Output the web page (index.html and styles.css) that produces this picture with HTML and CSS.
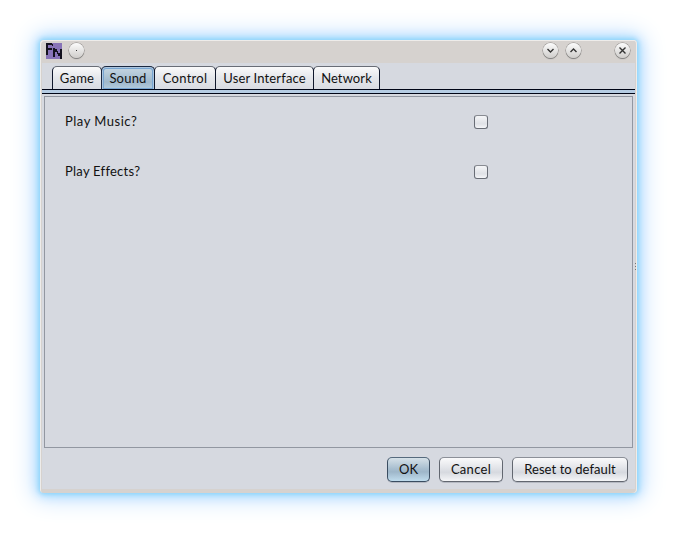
FILE: index.html
```html
<!DOCTYPE html>
<html lang="en">
<head>
<meta charset="utf-8">
<title>Settings</title>
<link rel="stylesheet" href="styles.css">
</head>
<body>
<main class="window">
  <header class="titlebar">
    <svg class="app-icon" viewBox="0 0 16 16" shape-rendering="crispEdges" aria-hidden="true">
      <path fill="#8874b8" d="M0 0h16v16H0z"/>
      <path fill="#14121f" d="M0 0h6v2H0zM0 2h2v10H0zM2 5h4v2H2zM6 1h1v2H6zM7 5h2v9H7zM9 6h2v3H9zM11 8h1v3h-1zM12 10h2v3h-2zM14 6h2v10h-2z"/>
    </svg>
    <span class="round menu"><svg viewBox="0 0 15 15"><path class="dot" d="M7 7h1v1H7z"/></svg></span>
    <span class="round minimize"><svg viewBox="0 0 15 15"><path d="M4.5 6l3 3 3-3"/></svg></span>
    <span class="round maximize"><svg viewBox="0 0 15 15"><path d="M4.5 9l3-3 3 3"/></svg></span>
    <span class="round close"><svg viewBox="0 0 15 15"><path d="M4.5 4.5l6 6m0-6l-6 6"/></svg></span>
  </header>
  <section class="content">
    <nav class="tabs">
      <button class="tab game">Game</button>
      <button class="tab sound selected">Sound</button>
      <button class="tab control">Control</button>
      <button class="tab interface">User Interface</button>
      <button class="tab network">Network</button>
    </nav>
    <div class="tab-line"></div>
    <div class="panel">
      <label class="row"><span class="label music">Play Music?</span><input type="checkbox"></label>
      <label class="row"><span class="label effects">Play Effects?</span><input type="checkbox"></label>
    </div>
    <footer class="actions">
      <button class="btn ok">OK</button>
      <button class="btn cancel">Cancel</button>
      <button class="btn reset">Reset to default</button>
    </footer>
    <svg class="grip" viewBox="0 0 1 7" shape-rendering="crispEdges"><path d="M0 0h1v1H0zM0 3h1v1H0zM0 6h1v1H0z"/></svg>
  </section>
</main>
</body>
</html>
```
FILE: styles.css
```css
* { box-sizing: border-box; }
body {
  margin: 0;
  padding: 40px;
  height: 533px;
  overflow: hidden;
  background: #fff;
  color: #111;
  font: 13px/16px Lato, "Open Sans", sans-serif;
}
button { font: inherit; color: inherit; padding: 0 0 2px; white-space: nowrap; }
.window {
  width: 597px;
  height: 453px;
  padding: 0 2px 4px;
  border-radius: 4px;
  background: #d6d2cf;
  box-shadow: 0 0 4px 1px #8cd5fb, 0 0 11px 2px #9fd8fc, 0 0 23px 6px #c4e0ff, inset 1px 1px 0 #eeecea, inset -1px 0 0 #eeecea;
}
.titlebar { display: flex; height: 23px; padding: 3px 5px 0 4px; }
.app-icon { width: 16px; height: 16px; }
.round {
  width: 15px;
  height: 15px;
  border-radius: 50%;
  background: linear-gradient(#fcfcfc, #cfcdcb);
  box-shadow: 0 0 0 .5px #8b8886, 0 1px 1px #777;
}
.round svg { display: block; width: 15px; height: 15px; }
.round path { fill: none; stroke: #333; stroke-width: 1.4; }
.round .dot { fill: #333; stroke: none; }
.menu { margin-left: 7px; }
.minimize { margin-left: auto; }
.maximize { margin-left: 8px; }
.close { margin-left: 34px; }
.content {
  position: relative;
  height: 426px;
  background: #d6d9e0;
}
.tabs { display: flex; height: 26px; padding: 3px 0 0 10px; }
.tab {
  height: 24px;
  margin-right: -1px;
  border: 1px solid #10182c;
  border-top-color: #696d76;
  border-bottom: 0;
  border-radius: 5px 5px 0 0;
  background: linear-gradient(#fafafb, #e5e7eb 45%, #d7dae1);
}
.tab.selected {
  border-color: #1c2940;
  background: linear-gradient(#c7d7e2, #a8c0d2 50%, #9fb7ca 65%, #b5cfe2);
  box-shadow: inset 0 0 0 1px #adc6df, inset 0 0 0 2px #78a5d1;
}
.game { width: 50px; letter-spacing: .2px; }
.sound { width: 54px; letter-spacing: .2px; }
.control { width: 62px; letter-spacing: .25px; }
.interface { width: 99px; letter-spacing: .15px; }
.network { width: 67px; letter-spacing: .1px; }
.tab-line {
  position: relative;
  height: 5px;
  border: solid #000516;
  border-width: 1px 0;
  background: #b5cce3;
}
.panel {
  width: 589px;
  height: 352px;
  margin: 2px 0 0 2px;
  border: 1px solid #9297a1;
  padding: 0 0 0 20px;
}
.row { display: grid; grid-template-columns: 409px 15px; height: 50px; align-items: center; }
.label { padding-bottom: 2px; }
.music { letter-spacing: .5px; }
.effects { letter-spacing: .25px; }
input {
  appearance: none;
  width: 14px;
  height: 14px;
  margin: 0 0 1px;
  border: 1px solid #696d76;
  border-top-color: #888b92;
  border-radius: 3px;
  background: linear-gradient(#f5f6f8, #dfe1e6 65%, #f4f5f8);
}
.actions { display: flex; justify-content: flex-end; gap: 9px; padding: 9px 7px 0 0; }
.btn {
  height: 25px;
  border: 1px solid #626770;
  border-top-color: #8c9098;
  border-radius: 5px;
  background: linear-gradient(#fafafb, #e1e3e8 45%, #d6d9df 62%, #f5f6f8);
  box-shadow: 0 1px 0 #b5b9c2;
}
.ok {
  width: 43px;
  border-color: #3a4d61;
  border-top-color: #566a7d;
  background: linear-gradient(#d6e1e8, #a9bfd0 45%, #9eb6c9 60%, #c0dced);
}
.cancel { width: 64px; letter-spacing: .3px; }
.reset { width: 116px; letter-spacing: .08px; }
.grip { position: absolute; right: -1px; top: 200px; width: 1px; height: 7px; fill: #777; }
```
